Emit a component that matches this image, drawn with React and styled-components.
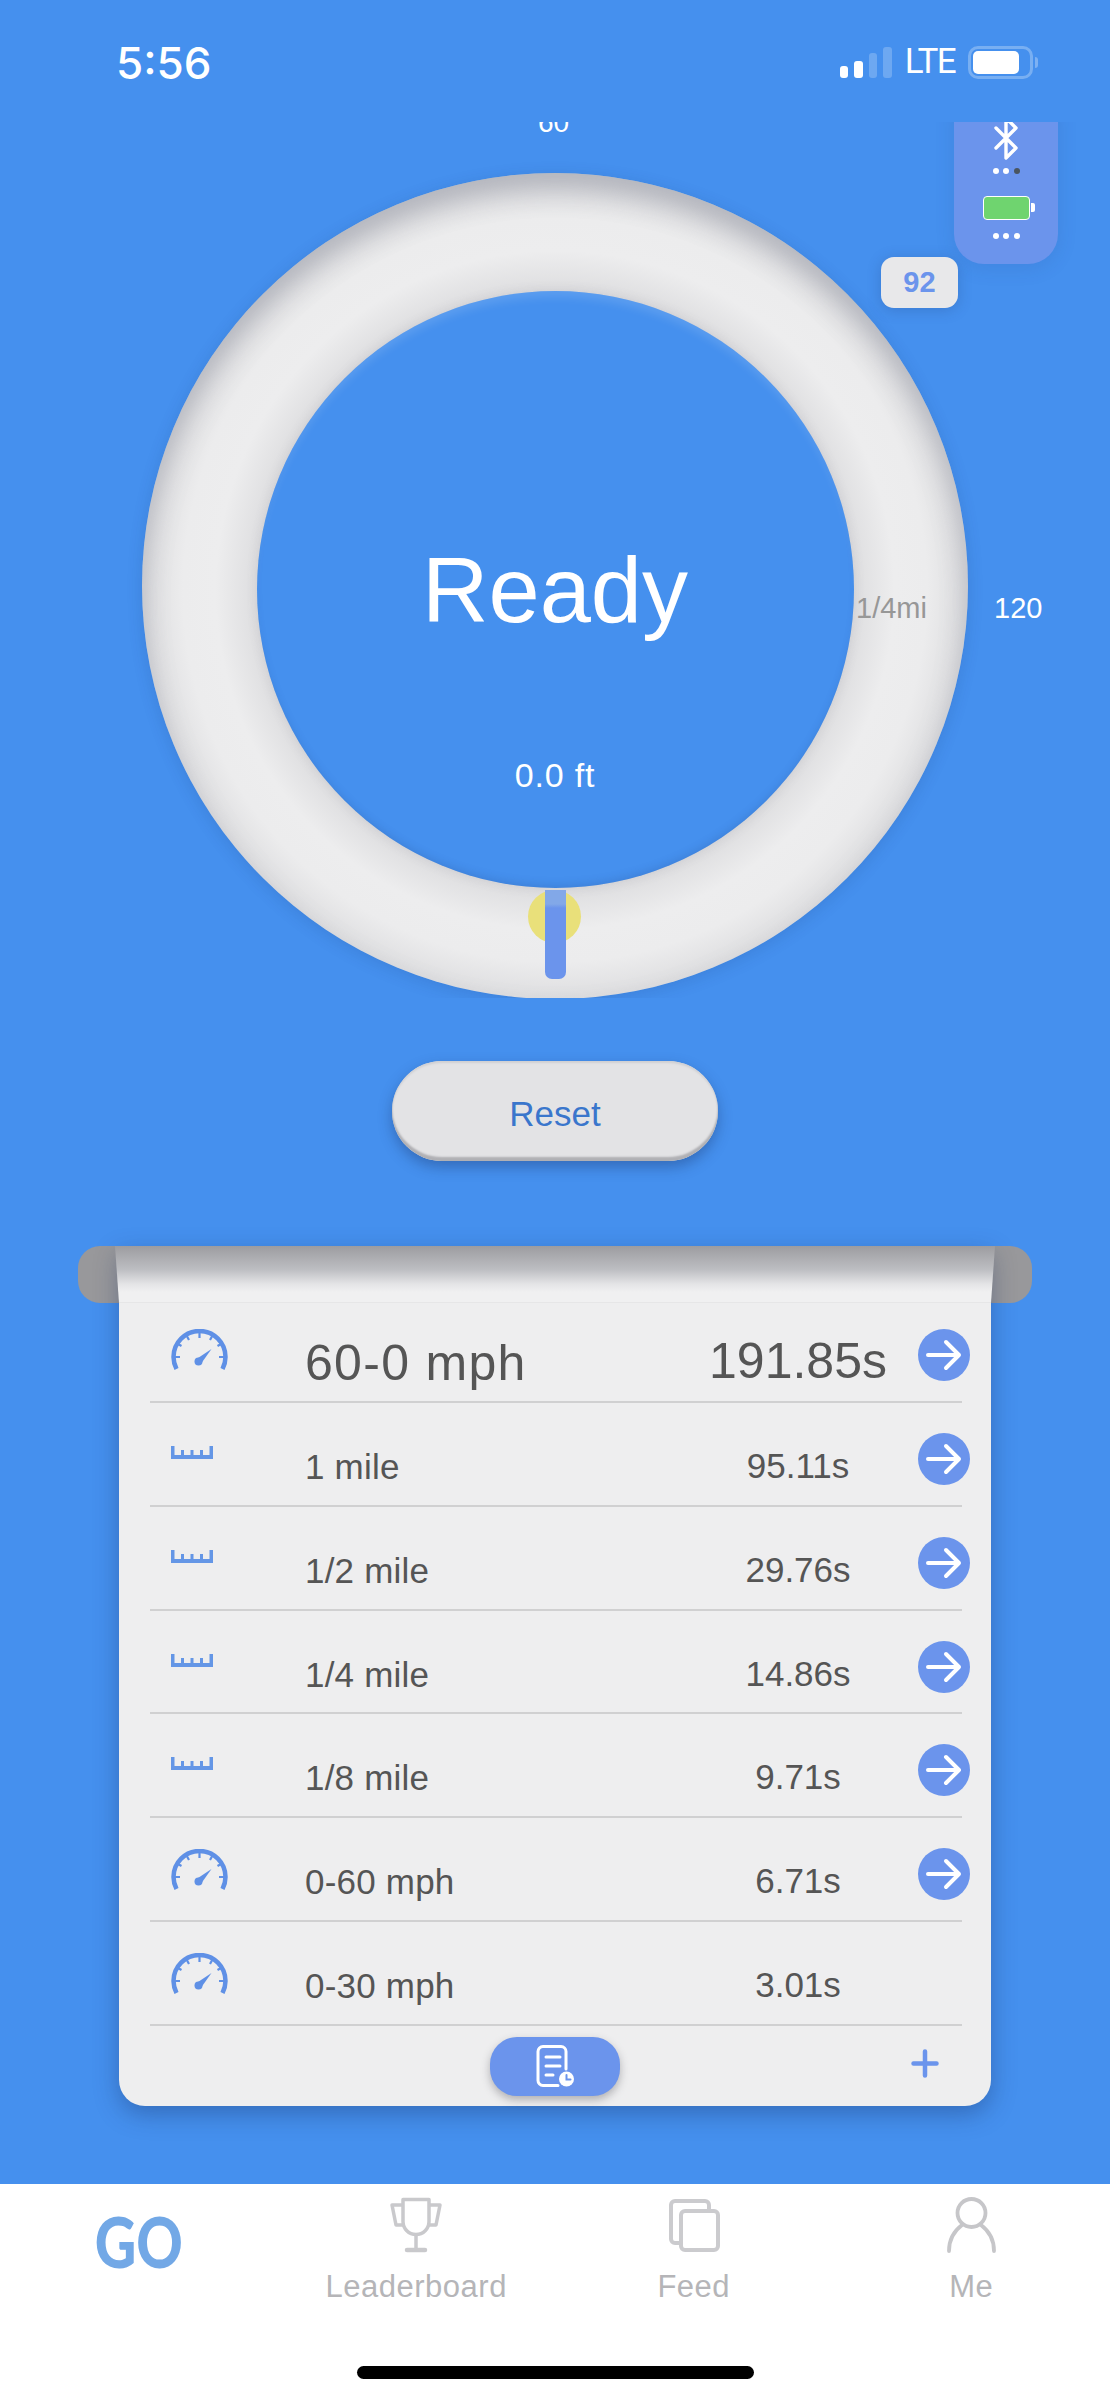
import styled, { createGlobalStyle } from "styled-components";

const BLUE = "#4590ee";
const ACCENT = "#6b94ec";

const GlobalStyle = createGlobalStyle`
  html, body {
    margin: 0;
    padding: 0;
    background: ${BLUE};
    font-family: "Liberation Sans", Arial, sans-serif;
  }
  * { box-sizing: border-box; }
`;

const Page = styled.div`
  width: 1110px;
  height: 2400px;
  display: flex;
  flex-direction: column;
  background: ${BLUE};
  overflow: hidden;
`;

/* status bar */
const StatusBar = styled.div`
  height: 122px;
  flex: none;
  display: flex;
  justify-content: space-between;
  padding: 41px 77px 0 116px;
`;

const Clock = styled.div`
  font-family: Inter, sans-serif;
  font-weight: 500;
  font-size: 44px;
  line-height: 44px;
  color: #fff;
`;

const StatusRight = styled.div`
  display: flex;
  align-items: flex-start;
  height: 40px;
  padding-top: 5px;
`;

const Signal = styled.div`
  display: flex;
  align-items: flex-end;
  gap: 6px;
  height: 32px;
  margin-right: 13px;
`;

const SignalBar = styled.span`
  width: 8.5px;
  height: ${(p) => p.$h}px;
  border-radius: 3px;
  background: ${(p) => (p.$dim ? "rgba(255,255,255,0.22)" : "#fff")};
`;

const Carrier = styled.div`
  font-family: Roboto, sans-serif;
  font-size: 35px;
  line-height: 32px;
  letter-spacing: -1.6px;
  color: #fff;
  margin-right: 13px;
`;

const PhoneBattery = styled.div`
  position: relative;
  width: 65px;
  height: 33px;
  border: 3px solid rgba(255, 255, 255, 0.28);
  border-radius: 10px;
  padding: 2px;
  &::after {
    content: "";
    position: absolute;
    right: -8px;
    top: 8px;
    width: 3px;
    height: 11px;
    border-radius: 0 3px 3px 0;
    background: rgba(255, 255, 255, 0.3);
  }
`;

const PhoneBatteryFill = styled.div`
  width: 46px;
  height: 100%;
  border-radius: 5px;
  background: #fff;
`;

/* gauge */
const GaugeArea = styled.div`
  position: relative;
  height: 876px;
  flex: none;
  padding-top: 51px;
  overflow: hidden;
  display: flex;
  justify-content: center;
`;

const Ring = styled.div`
  position: relative;
  width: 826px;
  height: 826px;
  flex: none;
  border-radius: 50%;
  background: radial-gradient(
    circle closest-side at 50% 50.5%,
    #dcdcde 72%,
    #ededee 83%,
    #ececed 91%,
    #dedee0 100%
  );
  display: flex;
  align-items: center;
  justify-content: center;
  box-shadow: 0 3px 16px rgba(20, 50, 110, 0.16),
    inset 0 16px 26px rgba(120, 124, 140, 0.42);
`;

const Hole = styled.div`
  width: 597px;
  height: 597px;
  margin-top: 7px;
  flex: none;
  border-radius: 50%;
  background: ${BLUE};
  display: flex;
  flex-direction: column;
  align-items: center;
  padding-top: 253px;
  color: #fff;
  box-shadow: 0 0 12px rgba(90, 95, 110, 0.14),
    inset 0 10px 10px -4px rgba(255, 255, 255, 0.13),
    inset 0 -6px 10px -4px rgba(30, 60, 120, 0.2);
`;

const ReadyText = styled.div`
  font-size: 92px;
  line-height: 92px;
`;

const Distance = styled.div`
  margin-top: 122px;
  font-size: 34px;
  line-height: 34px;
  letter-spacing: 0.8px;
`;

const YellowDot = styled.div`
  position: absolute;
  left: 386px;
  top: 717px;
  width: 53px;
  height: 53px;
  border-radius: 50%;
  background: #e9e07a;
`;

const Needle = styled.div`
  position: absolute;
  left: 403px;
  top: 717px;
  width: 21px;
  height: 89px;
  border-radius: 0 0 7px 7px;
  background: linear-gradient(#82a8e8 0, #82a8e8 14px, ${ACCENT} 18px);
`;

const ScaleLabel = styled.span`
  position: absolute;
  left: ${(p) => p.$x}px;
  top: ${(p) => p.$y}px;
  font-size: ${(p) => p.$size}px;
  line-height: 1;
  color: ${(p) => (p.$muted ? "#979797" : "#fff")};
`;

const SidePanel = styled.div`
  position: absolute;
  left: 954px;
  top: -20px;
  width: 104px;
  height: 162px;
  padding-top: 12px;
  border-radius: 0 0 30px 30px;
  background: ${ACCENT};
  display: flex;
  flex-direction: column;
  align-items: center;
  box-shadow: 0 4px 20px rgba(30, 60, 120, 0.12);
`;

const Dots = styled.div`
  display: flex;
  gap: 4.5px;
  margin-top: ${(p) => p.$top}px;
`;

const Dot = styled.span`
  width: 6px;
  height: 6px;
  border-radius: 50%;
  background: ${(p) => (p.$off ? "#4a5560" : "#fff")};
`;

const DeviceBattery = styled.div`
  position: relative;
  width: 47px;
  height: 24px;
  margin-top: 22px;
  border: 1.5px solid #fff;
  border-radius: 4px;
  background: #6fd46f;
  &::after {
    content: "";
    position: absolute;
    right: -6.5px;
    top: 6px;
    width: 4px;
    height: 9px;
    border-radius: 0 2px 2px 0;
    background: #fff;
  }
`;

const SpeedBadge = styled.div`
  position: absolute;
  left: 881px;
  top: 135px;
  width: 77px;
  height: 51px;
  border-radius: 13px;
  background: #e8e8ea;
  display: flex;
  align-items: center;
  justify-content: center;
  font-size: 29px;
  font-weight: 700;
  color: ${ACCENT};
  box-shadow: 0 2px 14px rgba(30, 60, 120, 0.25);
`;

/* reset */
const ResetRow = styled.div`
  display: flex;
  justify-content: center;
  padding-top: 63px;
  flex: none;
`;

const ResetButton = styled.button`
  width: 326px;
  height: 100px;
  padding-top: 6px;
  border: none;
  border-radius: 50px;
  background: #e3e3e5;
  color: #3a76cc;
  font-family: inherit;
  font-size: 35px;
  box-shadow: inset 0 -4px 2px #b0b0b4, inset 0 2px 2px #d0d0d3,
    0 6px 14px rgba(20, 40, 90, 0.35);
`;

/* results sheet */
const Sheet = styled.div`
  position: relative;
  margin: 85px 78px 0;
  padding: 0 41px;
  flex: none;
`;

const Rod = styled.div`
  position: absolute;
  left: 0;
  right: 0;
  top: 0;
  height: 57px;
  border-radius: 22px;
  background: #98989b;
`;

const Paper = styled.div`
  position: relative;
  height: 860px;
  display: flex;
  flex-direction: column;
  border-radius: 0 0 26px 26px;
  background: #eeeeef;
  box-shadow: 0 8px 24px rgba(20, 40, 90, 0.35);
`;

const PaperHead = styled.div`
  height: 57px;
  flex: none;
  margin: 0 -4px;
  clip-path: polygon(0 0, 100% 0, calc(100% - 4px) 100%, 4px 100%);
  border-bottom: 1px solid #e6e6e7;
  background: linear-gradient(#9c9ca0 0, #bdbec2 42%, #e4e4e6 68%, #f0f0f1 82%);
`;

const Rows = styled.div`
  margin: 0 29px 0 31px;
`;

const Row = styled.div`
  position: relative;
  display: grid;
  grid-template-columns: 155px 403px 180px 1fr;
  height: ${(p) => (p.$big ? 100 : 103.8)}px;
  border-bottom: 2px solid #d0d0d1;
`;

const IconCell = styled.div`
  padding: ${(p) => p.$top}px 0 0 21px;
`;

const Name = styled.div`
  margin-top: ${(p) => (p.$big ? 35 : 46)}px;
  font-size: ${(p) => (p.$big ? 50 : 35)}px;
  letter-spacing: ${(p) => (p.$big ? 1.3 : 0.2)}px;
  line-height: 1;
  color: #555;
`;

const Time = styled.div`
  margin-top: ${(p) => (p.$big ? 33 : 45)}px;
  font-size: ${(p) => (p.$big ? 50 : 35)}px;
  line-height: 1;
  text-align: center;
  color: #555;
`;

const GoButton = styled.div`
  width: 52px;
  height: 52px;
  margin: ${(p) => (p.$big ? 26 : 30)}px -8px 0 auto;
  border-radius: 50%;
  background: ${ACCENT};
  display: flex;
  align-items: center;
  justify-content: center;
`;

const SheetFooter = styled.div`
  display: grid;
  grid-template-columns: 1fr auto 1fr;
  padding: 11px 52px 0;
`;

const LogButton = styled.div`
  grid-column: 2;
  width: 130px;
  height: 59px;
  border-radius: 27px;
  background: ${ACCENT};
  display: flex;
  align-items: center;
  justify-content: center;
  box-shadow: 0 4px 8px rgba(60, 60, 70, 0.35);
`;

const PlusSlot = styled.div`
  display: flex;
  justify-content: flex-end;
  padding-top: 12px;
`;

/* tab bar */
const TabBar = styled.div`
  margin-top: 78px;
  flex: 1;
  background: #fff;
  display: flex;
  flex-direction: column;
  align-items: center;
`;

const Tabs = styled.div`
  width: 100%;
  height: 182px;
  display: grid;
  grid-template-columns: repeat(4, 1fr);
`;

const Tab = styled.div`
  display: flex;
  flex-direction: column;
  align-items: center;
  padding-top: 13px;
`;

const TabIcon = styled.div`
  height: 56px;
  margin-bottom: 18px;
`;

const TabLabel = styled.div`
  font-size: 31px;
  line-height: 1;
  letter-spacing: 0.5px;
  color: #b5b5b8;
`;

const GoLabel = styled.div`
  margin-top: 9px;
  font-family: Lato, sans-serif;
  font-weight: 900;
  font-size: 70px;
  line-height: 70px;
  transform: scaleX(0.82);
  color: #72a8e6;
`;

const HomeBar = styled.div`
  width: 397px;
  height: 13px;
  border-radius: 7px;
  background: #000;
`;

const GaugeIcon = () => (
  <svg width="57" height="41" viewBox="0 0 57 41" fill="none" stroke="#5f90e6" display="block">
    <path d="M5.500 40C3.500 36 2.500 32 2.500 28a26 26 0 0 1 52 0c0 4-1 8-3 12" strokeWidth="4.500" />
    <path
      d="M28.500 3v6M15.500 6.500l2.500 4.500M41.500 6.500l-2.500 4.500M6 14.500l4.500 2.500M51 14.500l-4.500 2.500M3 28h6M54 28h-6"
      strokeWidth="2.200"
    />
    <path d="M25.500 30l15-10-10 14z" fill="#5f90e6" stroke="none" />
    <circle cx="27.500" cy="32.500" r="4" fill="#5f90e6" stroke="none" />
  </svg>
);

const RulerIcon = () => (
  <svg width="42" height="13" viewBox="0 0 42 13" fill="#6496e6" display="block">
    <rect x="0" y="0" width="3.500" height="13" />
    <rect x="38.500" y="0" width="3.500" height="13" />
    <rect x="0" y="9" width="42" height="4" />
    <rect x="10" y="4" width="3" height="7" />
    <rect x="19.500" y="4" width="3" height="7" />
    <rect x="29" y="4" width="3" height="7" />
  </svg>
);

const ArrowIcon = () => (
  <svg width="52" height="52" viewBox="0 0 52 52" fill="none" stroke="#fff" strokeWidth="4" strokeLinecap="round" strokeLinejoin="round">
    <path d="M10 26h31M28 13l13 13-13 13" />
  </svg>
);

const DocIcon = () => (
  <svg width="38" height="42" viewBox="0 0 38 42" fill="none" stroke="#fff" strokeWidth="3" strokeLinecap="round">
    <path d="M22 40.500H7a5 5 0 0 1-5-5V6.500a5 5 0 0 1 5-5h18a5 5 0 0 1 5 5V24" />
    <path d="M10 12h14M10 21h14M10 30h7" />
    <circle cx="30.500" cy="34" r="7.500" fill="#fff" stroke="none" />
    <path d="M30.500 30v4.500h4" stroke={ACCENT} strokeWidth="2" fill="none" />
  </svg>
);

const PlusIcon = () => (
  <svg width="28" height="29" viewBox="0 0 28 29" fill="none" stroke={ACCENT} strokeWidth="4.500" strokeLinecap="round">
    <path d="M14 2.500v24M2.500 14.500h23" />
  </svg>
);

const BluetoothIcon = () => (
  <svg width="48" height="48" viewBox="0 0 24 24" fill="none" stroke="#fff" strokeWidth="1.700" strokeLinecap="round" strokeLinejoin="round">
    <path d="m7 7 10 10-5 5V2l5 5L7 17" />
  </svg>
);

const TrophyIcon = () => (
  <svg width="52" height="56" viewBox="0 0 52 56" fill="none" stroke="#c9c9cc" strokeWidth="3.500" strokeLinejoin="round">
    <path d="M13 2.500h26v22a13 13 0 0 1-26 0z" />
    <path d="M13 8H2l4 20h9M39 8h11l-4 20h-9" />
    <path d="M26 38v14" />
    <path d="M17 53h18" strokeWidth="4.500" strokeLinecap="round" />
  </svg>
);

const FeedIcon = () => (
  <svg width="52" height="56" viewBox="0 0 52 56" fill="none" stroke="#cbcbce" strokeWidth="4">
    <path d="M12 46H7a4 4 0 0 1-4-4V8a4 4 0 0 1 4-4h30a4 4 0 0 1 4 4v5" />
    <rect x="13" y="14" width="37" height="39" rx="4" />
  </svg>
);

const MeIcon = () => (
  <svg width="49" height="56" viewBox="0 0 49 56" fill="none" stroke="#c6c6c9" strokeWidth="3.800" strokeLinecap="round">
    <circle cx="24.500" cy="16" r="14" />
    <path d="M2 54c0-11 5-20 13-26M47 54c0-11-5-20-13-26" />
  </svg>
);

const results = [
  { name: "60-0 mph", time: "191.85s", icon: "gauge", big: true, go: true },
  { name: "1 mile", time: "95.11s", icon: "ruler", go: true },
  { name: "1/2 mile", time: "29.76s", icon: "ruler", go: true },
  { name: "1/4 mile", time: "14.86s", icon: "ruler", go: true },
  { name: "1/8 mile", time: "9.71s", icon: "ruler", go: true },
  { name: "0-60 mph", time: "6.71s", icon: "gauge", go: true },
  { name: "0-30 mph", time: "3.01s", icon: "gauge" },
];

const iconTop = (r) => {
  if (r.icon === "ruler") return 43;
  return r.big ? 26 : 31;
};

const App = () => {
  return (
    <Page>
      <GlobalStyle />
      <StatusBar>
        <Clock>5:56</Clock>
        <StatusRight>
          <Signal>
            <SignalBar $h={12} />
            <SignalBar $h={17} />
            <SignalBar $h={25} $dim />
            <SignalBar $h={31} $dim />
          </Signal>
          <Carrier>LTE</Carrier>
          <PhoneBattery>
            <PhoneBatteryFill />
          </PhoneBattery>
        </StatusRight>
      </StatusBar>

      <GaugeArea>
        <Ring>
          <Hole>
            <ReadyText>Ready</ReadyText>
            <Distance>0.0 ft</Distance>
          </Hole>
          <YellowDot />
          <Needle />
        </Ring>
        <ScaleLabel $x={538} $y={-13} $size={28}>60</ScaleLabel>
        <ScaleLabel $x={994} $y={472} $size={29}>120</ScaleLabel>
        <ScaleLabel $x={856} $y={472} $size={29} $muted>1/4mi</ScaleLabel>
        <SidePanel>
          <BluetoothIcon />
          <Dots $top={6}>
            <Dot />
            <Dot />
            <Dot $off />
          </Dots>
          <DeviceBattery />
          <Dots $top={13}>
            <Dot />
            <Dot />
            <Dot />
          </Dots>
        </SidePanel>
        <SpeedBadge>92</SpeedBadge>
      </GaugeArea>

      <ResetRow>
        <ResetButton>Reset</ResetButton>
      </ResetRow>

      <Sheet>
        <Rod />
        <Paper>
          <PaperHead />
          <Rows>
            {results.map((r) => (
              <Row key={r.name} $big={r.big}>
                <IconCell $top={iconTop(r)}>
                  {r.icon === "gauge" ? <GaugeIcon /> : <RulerIcon />}
                </IconCell>
                <Name $big={r.big}>{r.name}</Name>
                <Time $big={r.big}>{r.time}</Time>
                {r.go && (
                  <GoButton $big={r.big}>
                    <ArrowIcon />
                  </GoButton>
                )}
              </Row>
            ))}
          </Rows>
          <SheetFooter>
            <LogButton>
              <DocIcon />
            </LogButton>
            <PlusSlot>
              <PlusIcon />
            </PlusSlot>
          </SheetFooter>
        </Paper>
      </Sheet>

      <TabBar>
        <Tabs>
          <Tab>
            <GoLabel>GO</GoLabel>
          </Tab>
          <Tab>
            <TabIcon>
              <TrophyIcon />
            </TabIcon>
            <TabLabel>Leaderboard</TabLabel>
          </Tab>
          <Tab>
            <TabIcon>
              <FeedIcon />
            </TabIcon>
            <TabLabel>Feed</TabLabel>
          </Tab>
          <Tab>
            <TabIcon>
              <MeIcon />
            </TabIcon>
            <TabLabel>Me</TabLabel>
          </Tab>
        </Tabs>
        <HomeBar />
      </TabBar>
    </Page>
  );
};

export default App;
